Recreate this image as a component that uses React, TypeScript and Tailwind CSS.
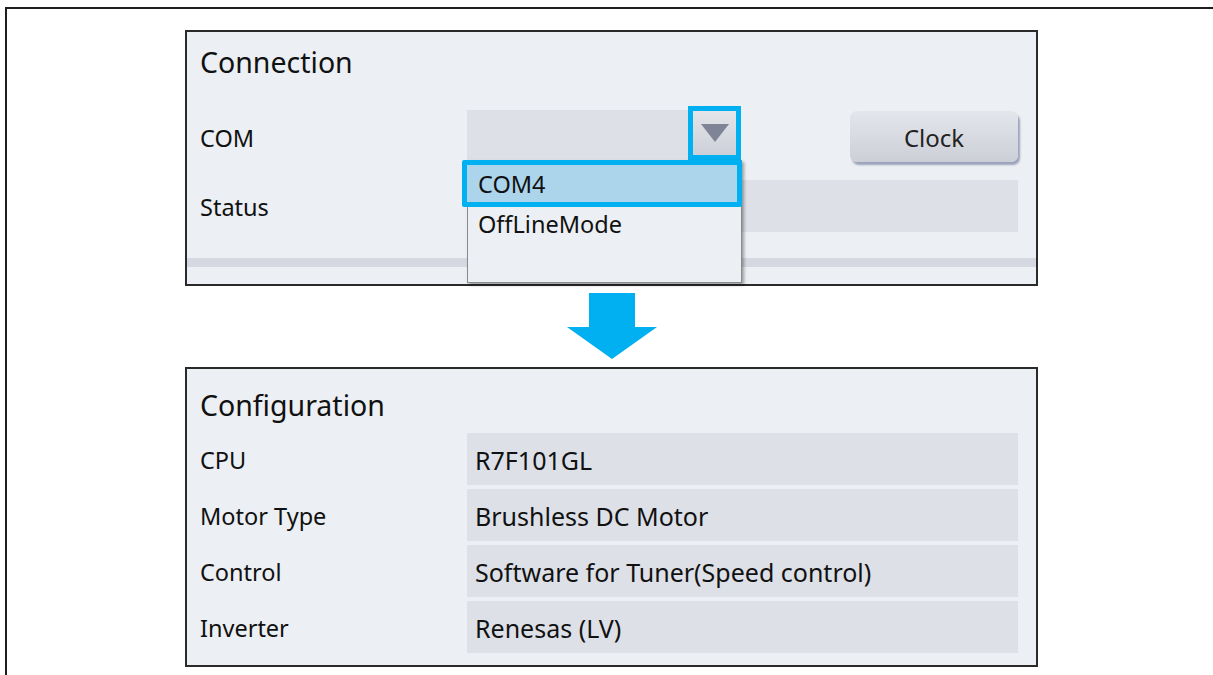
const font = { fontFamily: '"Noto Sans", "Open Sans", sans-serif' };

const configRows = [
  { label: "CPU", value: "R7F101GL" },
  { label: "Motor Type", value: "Brushless DC Motor" },
  { label: "Control", value: "Software for Tuner(Speed control)" },
  { label: "Inverter", value: "Renesas (LV)" },
];

const ConnectionPanel = () => (
  <div className="relative w-[853px] h-[256px] border-2 border-[#2a2a2a] bg-[#eceff3]">
    <div className="h-[60px] flex items-center pl-[13px] text-[28.5px] text-[#111]">
      Connection
    </div>

    {/* COM row */}
    <div className="mt-[18px] h-[50px] flex items-center">
      <div className="w-[280px] pl-[13px] pt-[8px] text-[23.5px] text-[#111]">COM</div>
      <div className="w-[274px] h-[50px] flex bg-[#dde0e7]">
        <div className="flex-1" />
        <div className="relative w-[53px] h-[54px] -mt-[4px] border-[5px] border-[#00b0f0] bg-gradient-to-b from-[#e3e5ea] to-[#cdd0d9] flex items-center justify-center">
          <svg width="28" height="18" viewBox="0 0 28 18">
            <polygon points="0,0 28,0 14,18" fill="#7f8497" />
          </svg>
        </div>
      </div>
      <div className="ml-[109px] w-[168px] h-[51px] mt-[3px] pt-[2px] rounded-[7px] bg-gradient-to-b from-[#e4e6ec] to-[#cdcfd8] shadow-[2px_3px_2px_rgba(90,100,140,0.55)] flex items-center justify-center text-[24px] text-[#222]">
        Clock
      </div>
    </div>

    {/* Status row */}
    <div className="mt-[20px] h-[52px] flex items-center">
      <div className="w-[280px] pl-[13px] pt-[3px] text-[23.5px] text-[#111]">Status</div>
      <div className="w-[551px] h-[52px] bg-[#dde0e7]" />
    </div>

    <div className="mt-[26px] h-[9px] bg-[#d5d8e0]" />

    {/* open dropdown list */}
    <div className="absolute left-[280px] top-[128px] w-[275px] h-[123px] bg-[#eceff3] border border-[#8a8a8a] shadow-[2px_2px_3px_rgba(0,0,0,0.35)]">
      <div className="-ml-[6px] -mt-[1px] w-[280px] h-[47px] pt-[3px] border-[5px] border-[#00b0f0] rounded-[2px] bg-[#acd5ec] flex items-center pl-[11px] text-[23.5px] text-[#111]">
        COM4
      </div>
      <div className="h-[36px] flex items-center pl-[10px] text-[23.5px] text-[#111]">
        OffLineMode
      </div>
    </div>
  </div>
);

const ConfigurationPanel = () => (
  <div className="w-[853px] h-[300px] border-2 border-[#2a2a2a] bg-[#eceff3]">
    <div className="h-[64px] pt-[8px] flex items-center pl-[13px] text-[28.5px] text-[#111]">
      Configuration
    </div>
    <div className="flex flex-col gap-[4px]">
      {configRows.map((row) => (
        <div key={row.label} className="h-[52px] flex items-center">
          <div className="w-[280px] pl-[13px] pt-[3px] text-[23.5px] text-[#111]">{row.label}</div>
          <div className="w-[551px] h-[52px] bg-[#dde0e7] flex items-center pl-[8px] pt-[3px] text-[25px] text-[#111]">
            {row.value}
          </div>
        </div>
      ))}
    </div>
  </div>
);

export default function App() {
  return (
    <div className="w-[1213px] h-[675px] overflow-hidden bg-white" style={font}>
      <div className="ml-[5px] mt-[7px] w-[1240px] h-[700px] border-2 border-[#1e1e1e]">
        <div className="ml-[178px] mt-[21px] w-[853px] flex flex-col">
          <ConnectionPanel />
          <div className="h-[81px] flex justify-center pt-[7px]">
            <svg width="90" height="66" viewBox="0 0 90 66">
              <polygon points="22,0 68,0 68,34 90,34 45,66 0,34 22,34" fill="#00b0f0" />
            </svg>
          </div>
          <ConfigurationPanel />
        </div>
      </div>
    </div>
  );
}
